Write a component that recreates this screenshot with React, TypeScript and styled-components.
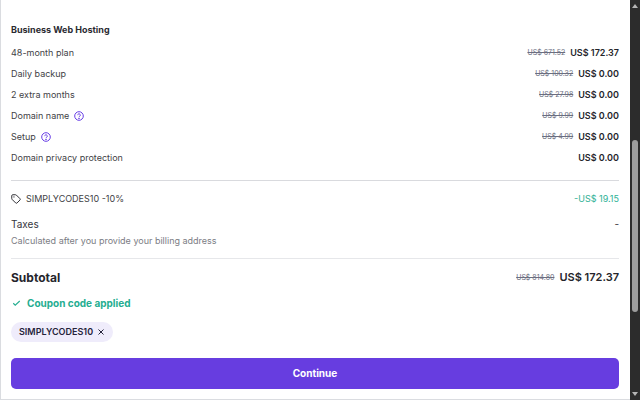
import React from "react";
import styled, { createGlobalStyle } from "styled-components";

const GlobalStyle = createGlobalStyle`
  *, *::before, *::after { box-sizing: border-box; }
  body {
    margin: 0;
    background: #ffffff;
    color: #36344d;
    font-family: Inter, "Liberation Sans", sans-serif;
    font-size: 9px;
  }
  button { font: inherit; border: 0; padding: 0; cursor: pointer; }
`;

const Page = styled.div`
  display: flex;
  min-height: 100vh;
`;

const Summary = styled.main`
  flex: 1;
  min-width: 0;
  display: flex;
  flex-direction: column;
  padding: 20px 11px 10px 10px;
  border-left: 1px solid #dadce0;
  border-bottom: 1px solid #dadce0;
`;

const Title = styled.h2`
  margin: 0 0 2px;
  font-size: 9px;
  line-height: 20px;
  font-weight: 700;
  color: #2a2a31;
`;

const Items = styled.ul`
  list-style: none;
  margin: 0;
  padding: 0;
`;

const Row = styled.li`
  display: flex;
  align-items: center;
  justify-content: space-between;
  line-height: 21px;
`;

const Label = styled.span`
  display: flex;
  align-items: center;
  gap: 5px;
  color: #3f3f46;
`;

const Prices = styled.span<{ $large?: boolean }>`
  display: flex;
  align-items: center;
  gap: 5px;
  font-weight: 600;
  font-size: ${(p) => (p.$large ? 11 : 9)}px;
  color: #25252b;
`;

const OldPrice = styled.s`
  font-size: 7px;
  font-weight: 400;
  color: #6b6e80;
`;

const HelpButton = styled.button`
  display: flex;
  background: none;
  color: #673de6;
`;

const Divider = styled.hr<{ $light?: boolean }>`
  width: 100%;
  height: 1px;
  border: 0;
  margin: ${(p) => (p.$light ? "9px 0 6px" : "12px 0 7px")};
  background: ${(p) => (p.$light ? "#e6e7ea" : "#d9dade")};
`;

const Discount = styled.span`
  color: #2fb296;
`;

const Taxes = styled.div`
  display: flex;
  justify-content: space-between;
  margin-top: 6px;
  font-size: 10px;
  line-height: 18px;
  color: #36363d;
`;

const Note = styled.p`
  margin: 0;
  line-height: 16px;
  color: #7c7d84;
`;

const Subtotal = styled.div`
  display: flex;
  align-items: center;
  justify-content: space-between;
  line-height: 25px;
`;

const SubtotalLabel = styled.strong`
  font-size: 12px;
  font-weight: 700;
  color: #25252b;
`;

const Applied = styled.div`
  display: flex;
  align-items: center;
  gap: 5px;
  margin: 4px 0 10px;
  font-size: 10px;
  line-height: 18px;
  font-weight: 700;
  color: #24ad90;
`;

const Chip = styled.div`
  align-self: flex-start;
  display: flex;
  align-items: center;
  gap: 4px;
  padding: 0 8px;
  border-radius: 10px;
  line-height: 20px;
  font-weight: 600;
  color: #25233a;
  background: #efecfb;
`;

const RemoveButton = styled.button`
  display: flex;
  background: none;
  color: #25233a;
`;

const ContinueButton = styled.button`
  width: 100%;
  margin-top: 16px;
  border-radius: 5px;
  font-size: 10px;
  line-height: 31px;
  font-weight: 700;
  color: #ffffff;
  background: #673de0;
`;

const ScrollRail = styled.aside`
  width: 10px;
  display: flex;
  flex-direction: column;
  align-items: center;
  background: #2c2c2c;
`;

const ScrollArrow = styled.button`
  width: 100%;
  height: 12px;
  display: flex;
  align-items: center;
  justify-content: center;
  color: #b5b5b5;
  background: none;
`;

const ScrollTrack = styled.div`
  flex: 1;
  display: grid;
  grid-template-rows: 128fr 172fr 76fr;
`;

const ScrollThumb = styled.div`
  grid-row: 2;
  width: 6px;
  border-radius: 3px;
  background: #9d9d9d;
`;

const HelpIcon = () => (
  <svg width="10" height="10" viewBox="0 0 20 20" fill="none" stroke="currentColor" strokeWidth="2">
    <circle cx="10" cy="10" r="8.6" />
    <path d="M7.4 8.2a2.6 2.6 0 1 1 4.1 2.2c-1 .6-1.5 1-1.5 1.8" />
    <circle cx="10" cy="14.6" r=".7" fill="currentColor" />
  </svg>
);

const TagIcon = () => (
  <svg width="10" height="10" viewBox="0 0 20 20" fill="none" stroke="#303036" strokeWidth="2" strokeLinejoin="round">
    <path d="M1.5 3.5a2 2 0 0 1 2-2h5.8a2 2 0 0 1 1.4.6l7.2 7.2a2 2 0 0 1 0 2.8l-5.8 5.8a2 2 0 0 1-2.8 0L2.1 10.7a2 2 0 0 1-.6-1.4z" />
    <circle cx="5.9" cy="5.9" r="1.2" fill="#303036" stroke="none" />
  </svg>
);

const CheckIcon = () => (
  <svg width="11" height="10" viewBox="0 0 22 20" fill="none" stroke="currentColor" strokeWidth="2.2">
    <path d="M4.5 10.5l4 4L17.5 6" />
  </svg>
);

const CloseIcon = () => (
  <svg width="8" height="8" viewBox="0 0 16 16" fill="none" stroke="currentColor" strokeWidth="2">
    <path d="M3 3l10 10M13 3L3 13" />
  </svg>
);

const ArrowIcon = ({ down }: { down?: boolean }) => (
  <svg width="6" height="4" viewBox="0 0 6 4" fill="currentColor">
    <path d={down ? "M0 0h6L3 4z" : "M0 4h6L3 0z"} />
  </svg>
);

interface Item {
  name: string;
  price: string;
  old?: string;
  help?: boolean;
}

const items: Item[] = [
  { name: "48-month plan", old: "US$ 671.52", price: "US$ 172.37" },
  { name: "Daily backup", old: "US$ 100.32", price: "US$ 0.00" },
  { name: "2 extra months", old: "US$ 27.98", price: "US$ 0.00" },
  { name: "Domain name", old: "US$ 9.99", price: "US$ 0.00", help: true },
  { name: "Setup", old: "US$ 4.99", price: "US$ 0.00", help: true },
  { name: "Domain privacy protection", price: "US$ 0.00" },
];

export default function App() {
  return (
    <>
      <GlobalStyle />
      <Page>
        <Summary>
          <Title>Business Web Hosting</Title>
          <Items>
            {items.map((item) => (
              <Row key={item.name}>
                <Label>
                  {item.name}
                  {item.help && (
                    <HelpButton type="button" aria-label={`About ${item.name}`}>
                      <HelpIcon />
                    </HelpButton>
                  )}
                </Label>
                <Prices>
                  {item.old && <OldPrice>{item.old}</OldPrice>}
                  {item.price}
                </Prices>
              </Row>
            ))}
          </Items>
          <Divider />
          <Row as="div">
            <Label>
              <TagIcon />
              SIMPLYCODES10 -10%
            </Label>
            <Discount>-US$ 19.15</Discount>
          </Row>
          <Taxes>
            <span>Taxes</span>
            <span>-</span>
          </Taxes>
          <Note>Calculated after you provide your billing address</Note>
          <Divider $light />
          <Subtotal>
            <SubtotalLabel>Subtotal</SubtotalLabel>
            <Prices $large>
              <OldPrice>US$ 814.80</OldPrice>
              US$ 172.37
            </Prices>
          </Subtotal>
          <Applied role="status">
            <CheckIcon />
            Coupon code applied
          </Applied>
          <Chip>
            SIMPLYCODES10
            <RemoveButton type="button" aria-label="Remove coupon SIMPLYCODES10">
              <CloseIcon />
            </RemoveButton>
          </Chip>
          <ContinueButton type="button">Continue</ContinueButton>
        </Summary>
        <ScrollRail>
          <ScrollArrow type="button" aria-label="Scroll up">
            <ArrowIcon />
          </ScrollArrow>
          <ScrollTrack>
            <ScrollThumb />
          </ScrollTrack>
          <ScrollArrow type="button" aria-label="Scroll down">
            <ArrowIcon down />
          </ScrollArrow>
        </ScrollRail>
      </Page>
    </>
  );
}
